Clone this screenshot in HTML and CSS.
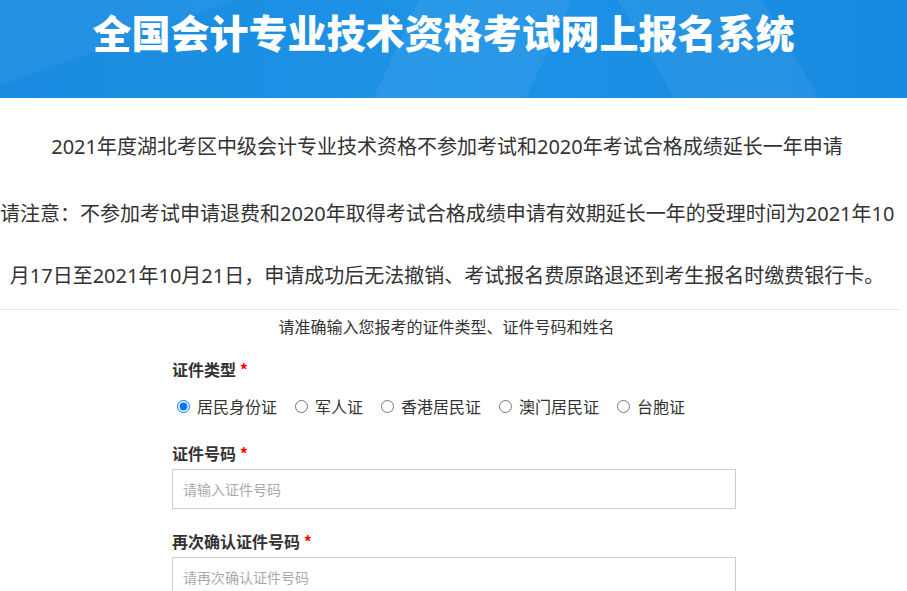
FILE: index.html
```html
<!DOCTYPE html>
<html lang="zh-CN">
<head>
<meta charset="utf-8">
<title>全国会计专业技术资格考试网上报名系统</title>
<link rel="stylesheet" href="styles.css">
</head>
<body>
<header class="banner">
  <h1 class="banner-title">全国会计专业技术资格考试网上报名系统</h1>
</header>
<main class="page">
  <section class="notice">
    <p class="notice-title">2021年度湖北考区中级会计专业技术资格不参加考试和2020年考试合格成绩延长一年申请</p>
    <p class="notice-text">请注意：不参加考试申请退费和2020年取得考试合格成绩申请有效期延长一年的受理时间为2021年10<br>月17日至2021年10月21日，申请成功后无法撤销、考试报名费原路退还到考生报名时缴费银行卡。</p>
  </section>
  <div class="divider"></div>
  <p class="form-tip">请准确输入您报考的证件类型、证件号码和姓名</p>
  <form class="form">
    <div class="group group-type">
      <div class="label">证件类型 <span class="req">*</span></div>
      <div class="radios">
        <label class="radio"><input type="radio" name="idtype" checked><span>居民身份证</span></label>
        <label class="radio"><input type="radio" name="idtype"><span>军人证</span></label>
        <label class="radio"><input type="radio" name="idtype"><span>香港居民证</span></label>
        <label class="radio"><input type="radio" name="idtype"><span>澳门居民证</span></label>
        <label class="radio"><input type="radio" name="idtype"><span>台胞证</span></label>
      </div>
    </div>
    <div class="group">
      <div class="label">证件号码 <span class="req">*</span></div>
      <input class="field" type="text" placeholder="请输入证件号码">
    </div>
    <div class="group">
      <div class="label">再次确认证件号码 <span class="req">*</span></div>
      <input class="field" type="text" placeholder="请再次确认证件号码">
    </div>
  </form>
</main>
</body>
</html>
```
FILE: styles.css
```css
html, body {
  margin: 0;
  padding: 0;
  background: #fff;
  overflow: hidden;
}
body {
  font-family: "Noto Sans CJK SC", "Noto Sans", sans-serif;
  color: #333;
}
.banner {
  height: 98px;
  box-sizing: border-box;
  padding: 6px 20px 0 0;
  background:
    linear-gradient(115deg, rgba(255,255,255,0) 0%, rgba(255,255,255,0) 44%, rgba(255,255,255,0.06) 44%, rgba(255,255,255,0.06) 60%, rgba(255,255,255,0) 60%),
    linear-gradient(60deg, rgba(255,255,255,0) 0%, rgba(255,255,255,0) 70%, rgba(255,255,255,0.05) 70%, rgba(255,255,255,0.05) 85%, rgba(255,255,255,0) 85%),
    linear-gradient(160deg, rgba(255,255,255,0.04) 0%, rgba(255,255,255,0.04) 20%, rgba(255,255,255,0) 20%),
    linear-gradient(90deg, #1a8be0 0%, #1d93e6 50%, #1889e0 100%);
}
.banner-title {
  margin: 0;
  text-align: center;
  font-size: 39px;
  line-height: 50px;
  font-weight: 900;
  color: #fff;
  letter-spacing: 0;
}
.page {
  width: 901px;
}
.notice {
  padding-right: 7px;
  text-align: center;
  font-family: "Noto Sans", "Noto Sans CJK SC", sans-serif;
  font-size: 20px;
  color: #333;
}
.notice p {
  margin: 0;
  white-space: nowrap;
  line-height: 62px;
}
.notice-title {
  padding-top: 18px;
}
.notice-text {
  padding-top: 5px;
}
.divider {
  height: 1px;
  margin-top: 2px;
  background: #e8e8e8;
}
.form-tip {
  margin: 4px 0 0;
  padding-right: 8px;
  text-align: center;
  font-size: 16px;
  line-height: 24px;
  color: #333;
}
.form {
  width: 564px;
  margin: 19px 0 0 172px;
}
.group {
  margin-bottom: 20px;
}
.group-type {
  margin-bottom: 23px;
}
.label {
  font-size: 16px;
  line-height: 24px;
  font-weight: bold;
  color: #333;
}
.req {
  color: #f00;
}
.radios {
  display: flex;
  margin-top: 13px;
  height: 24px;
  align-items: center;
}
.radio {
  display: inline-flex;
  align-items: center;
  margin-right: 13px;
  font-size: 16px;
  line-height: 24px;
  color: #333;
}
.radio input {
  width: 13px;
  height: 13px;
  margin: 0 7px 0 5px;
}
.field {
  display: block;
  box-sizing: border-box;
  width: 564px;
  height: 40px;
  margin-top: 4px;
  padding: 0 10px;
  border: 1px solid #ccc;
  border-radius: 0;
  font-family: "Noto Sans CJK SC", "Noto Sans", sans-serif;
  font-size: 14px;
  color: #333;
  outline: none;
}
.field::placeholder {
  color: #aaa;
}
```
